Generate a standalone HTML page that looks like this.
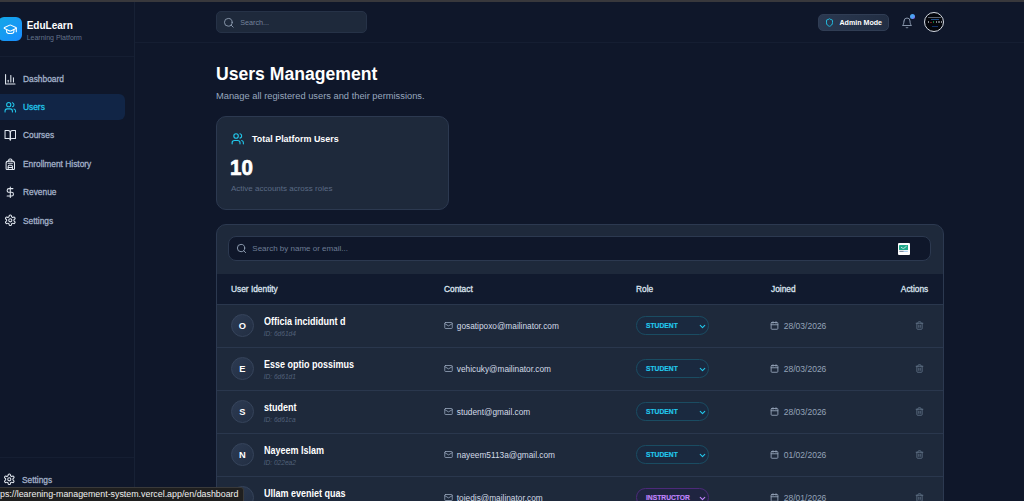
<!DOCTYPE html>
<html><head><meta charset="utf-8">
<style>
*{box-sizing:border-box;margin:0;padding:0}
html,body{width:1024px;height:501px;overflow:hidden;background:#0f172a;font-family:"Liberation Sans",sans-serif;color:#e2e8f0}
.abs{position:absolute}
#topbar{left:0;top:0;width:1024px;height:2px;background:#38383c}
#side{left:0;top:2px;width:135px;height:499px;border-right:1px solid #172135}
#sidehead{left:0;top:2px;width:134px;height:55px;border-bottom:1px solid #151e32}
#logo{left:-2.5px;top:17px;width:24px;height:24px;border-radius:6px;background:linear-gradient(135deg,#12a8e6,#1a8cff)}
.brand{left:26.7px;top:18.5px;font-size:10px;font-weight:700;color:#fff;line-height:13px;white-space:nowrap}
.brand2{left:26.7px;top:33.5px;font-size:7px;color:#64748b;line-height:8px;white-space:nowrap}
.nav{left:23px;font-size:8.8px;font-weight:400;-webkit-text-stroke:.3px;color:#a3b1c9;height:12px;line-height:12px;white-space:nowrap;transform:scaleX(.95);transform-origin:0 50%}
#active{left:0;top:94px;width:125px;height:26px;border-radius:0 6px 6px 0;background:#112546}
#sidefoot{left:0;top:457px;width:134px;height:1px;background:#151e32}
#mainhead{left:135px;top:42px;width:889px;height:1px;background:#151e32}
#search{left:216px;top:11px;width:151px;height:22.3px;border-radius:5px;background:#1e293b;border:1px solid #263247}
#search span{position:absolute;left:23.3px;top:6.6px;font-size:7.2px;line-height:8px;color:#75839b}
#admin{left:818px;top:13.8px;width:71px;height:17.4px;border-radius:5px;background:linear-gradient(90deg,#2a3850,#222e43);border:1px solid #303d54}
#admin span{position:absolute;left:20.5px;top:4.5px;font-size:7.1px;line-height:8px;font-weight:700;color:#fff;white-space:nowrap}
#dot{left:910px;top:13.9px;width:5.2px;height:5.2px;border-radius:50%;background:linear-gradient(135deg,#4aa3f2 55%,#a855f7)}
#avatar{left:924px;top:12px;width:20px;height:20px;border-radius:50%;background:#04060c;border:.9px solid #d5dbe4;overflow:hidden}
#avatar i{position:absolute;display:block;opacity:.6}
h1{position:absolute;left:216px;top:64.3px;font-size:17.6px;font-weight:700;color:#fff;white-space:nowrap;line-height:20px}
.sub{left:216px;top:90px;font-size:9.32px;color:#98a7be;white-space:nowrap;line-height:12px}
#card{left:216px;top:116px;width:233px;height:94px;border-radius:10px;background:#1e293b;border:1px solid #2c3950}
#tbl{left:216px;top:224px;width:728px;height:300px;border-radius:10px;background:#1e293b;border:1px solid #2c3950;overflow:hidden}
#tsearch{left:228px;top:236px;width:702.5px;height:25px;border-radius:8px;background:#0f172a;border:1px solid #2c3950}
#thead{left:217px;top:273.5px;width:726px;height:30.5px;background:#111a2e}
.th{top:284px;font-size:8.6px;font-weight:400;-webkit-text-stroke:.3px;color:#dbe3ee;line-height:10px;white-space:nowrap;transform:scaleX(.97);transform-origin:0 50%}
.row{left:217px;width:726px;height:43px;border-top:1px solid #2a374d}
.av{left:230.8px;width:23px;height:23px;border-radius:50%;background:linear-gradient(135deg,#2c3a52,#222e42);border:1px solid #36445b;text-align:center;line-height:23px;font-size:9.3px;font-weight:700;color:#fff}
.nm{left:263.7px;font-size:10px;font-weight:700;color:#fff;line-height:12px;white-space:nowrap;transform:scaleX(.9);transform-origin:0 50%}
.id{left:263.7px;font-size:6.6px;font-style:italic;color:#52617a;line-height:8px;white-space:nowrap}
.em{left:456.8px;font-size:8.3px;color:#d3dbe7;line-height:10px;white-space:nowrap}
.sel{left:636px;width:73px;height:18.6px;border-radius:9.3px;border:1px solid #1a4c62;background:#1a293f}
.sel span{position:absolute;left:8.7px;top:4.05px;font-size:8px;font-weight:700;-webkit-text-stroke:.2px;color:#22c8ec;line-height:9px;transform:scaleX(.84);transform-origin:0 50%}
.dt{left:783.8px;font-size:8.5px;color:#94a3b8;line-height:10px;white-space:nowrap}
#status{left:-1px;top:487px;width:245px;height:15px;background:#1f1f1f;border:1px solid #3a3a3a;border-radius:0 3px 0 0;font-size:8.86px;color:#f0f0f0;line-height:13px;white-space:nowrap;padding-left:0}
#ext{left:898px;top:243.2px;width:11.6px;height:11.6px;background:#fdfdfd;border-radius:1px}
</style></head><body>
<div class="abs" id="topbar"></div>
<div class="abs" id="side"></div>
<div class="abs" id="sidehead"></div>
<div class="abs" id="logo"></div>
<div class="abs brand">EduLearn</div>
<div class="abs brand2">Learning Platform</div>
<div class="abs" id="active"></div>
<div class="abs nav" style="top:73.4px">Dashboard</div>
<div class="abs nav" style="top:101.4px;color:#22c8ec">Users</div>
<div class="abs nav" style="top:129.2px">Courses</div>
<div class="abs nav" style="top:157.9px">Enrollment History</div>
<div class="abs nav" style="top:186.3px">Revenue</div>
<div class="abs nav" style="top:214.5px">Settings</div>
<div class="abs" id="sidefoot"></div>
<div class="abs nav" style="top:473.5px;left:21.7px">Settings</div>
<div class="abs" id="mainhead"></div>
<div class="abs" id="search"><span>Search...</span></div>
<div class="abs" id="admin"><span>Admin Mode</span></div>
<div class="abs" id="dot"></div>
<div class="abs" id="avatar">
<i style="left:2.5px;top:4.3px;width:13.5px;height:1px;background:#9aa3b0"></i>
<i style="left:5.5px;top:6.2px;width:8.5px;height:.9px;background:#2d7be0"></i>
<i style="left:2.6px;top:8.3px;width:1.4px;height:2px;background:#e5e7eb"></i>
<i style="left:5.2px;top:8.7px;width:1.6px;height:1.4px;background:#b3302a"></i>
<i style="left:8.2px;top:7.7px;width:1.2px;height:2.8px;background:#22c55e"></i>
<i style="left:10.8px;top:8.3px;width:1.4px;height:2px;background:#cfd4dc"></i>
<i style="left:13.4px;top:8.3px;width:1.4px;height:2px;background:#9aa3b0"></i>
<i style="left:16px;top:8.3px;width:1.4px;height:2px;background:#e5e7eb"></i>
<i style="left:6.5px;top:12.5px;width:6px;height:.8px;background:#1d4fa8"></i>
</div>
<h1>Users Management</h1>
<div class="abs sub">Manage all registered users and their permissions.</div>
<div class="abs" id="card"></div>
<div class="abs" style="left:252px;top:133px;font-size:8.95px;font-weight:700;color:#fff;line-height:12px;white-space:nowrap">Total Platform Users</div>
<div class="abs" style="left:230.3px;top:155.6px;font-size:21.6px;font-weight:700;color:#fff;line-height:24px;-webkit-text-stroke:.7px #fff;transform:scaleX(.95);transform-origin:0 50%">10</div>
<div class="abs" style="left:231px;top:184px;font-size:8px;color:#5b6a84;line-height:10px;white-space:nowrap">Active accounts across roles</div>
<div class="abs" id="tbl"></div>
<div class="abs" id="tsearch"></div>
<div class="abs" style="left:252.3px;top:244px;font-size:8px;color:#6d7c95;line-height:10px;white-space:nowrap">Search by name or email...</div>
<div class="abs" id="ext"><svg class="abs" style="left:1.2px;top:1.8px" width="9.2" height="8" viewBox="0 0 23 20"><rect x="0" y="0" width="23" height="12.5" rx="1" fill="#1fa98b"/><path d="M5 5.5l4 2.5 3 .5L19 3" fill="none" stroke="#e3f6f1" stroke-width="2"/><rect x="1" y="14.5" width="11" height="3" fill="#7f8da4"/><rect x="12" y="14.5" width="10" height="3" fill="#a8cdf0"/></svg></div>
<div class="abs" id="thead"></div>
<div class="abs th" style="left:231px">User Identity</div>
<div class="abs th" style="left:444px">Contact</div>
<div class="abs th" style="left:636px">Role</div>
<div class="abs th" style="left:771px">Joined</div>
<div class="abs th" style="right:95.6px;transform-origin:100% 50%">Actions</div>
<div class="abs row" style="top:304px"></div>
<div class="abs av" style="top:314.40px">O</div>
<div class="abs nm" style="top:315.60px">Officia incididunt d</div>
<div class="abs id" style="top:330.10px">ID: 6d61d4</div>
<svg class="abs" style="left:443.70px;top:321.10px" width="9" height="9" viewBox="0 0 24 24" fill="none" stroke="#94a3b8" stroke-width="2.2" stroke-linecap="round" stroke-linejoin="round"><rect x="2" y="4" width="20" height="16" rx="2"/><path d="m22 7-10 6L2 7"/></svg>
<div class="abs em" style="top:321.10px">gosatipoxo@mailinator.com</div>
<div class="abs sel" style="top:316.20px"><span>STUDENT</span></div>
<svg class="abs" style="left:697.80px;top:321.60px" width="9" height="9" viewBox="0 0 24 24" fill="none" stroke="#22c8ec" stroke-width="3" stroke-linecap="round" stroke-linejoin="round"><path d="m6 9 6 6 6-6"/></svg>
<svg class="abs" style="left:770.30px;top:321.10px" width="9" height="9" viewBox="0 0 24 24" fill="none" stroke="#94a3b8" stroke-width="2.4" stroke-linecap="round" stroke-linejoin="round"><rect x="3" y="4" width="18" height="18" rx="2"/><path d="M16 2v4M8 2v4M3 10h18"/></svg>
<div class="abs dt" style="top:321.10px">28/03/2026</div>
<svg class="abs" style="left:914.70px;top:321.10px" width="9" height="9" viewBox="0 0 24 24" fill="none" stroke="#64748b" stroke-width="2.2" stroke-linecap="round" stroke-linejoin="round"><path d="M3 6h18M19 6v14a2 2 0 0 1-2 2H7a2 2 0 0 1-2-2V6M8 6V4a2 2 0 0 1 2-2h4a2 2 0 0 1 2 2v2M10 11v6M14 11v6"/></svg>
<div class="abs row" style="top:347px"></div>
<div class="abs av" style="top:357.40px">E</div>
<div class="abs nm" style="top:358.60px">Esse optio possimus</div>
<div class="abs id" style="top:373.10px">ID: 6d61d1</div>
<svg class="abs" style="left:443.70px;top:364.10px" width="9" height="9" viewBox="0 0 24 24" fill="none" stroke="#94a3b8" stroke-width="2.2" stroke-linecap="round" stroke-linejoin="round"><rect x="2" y="4" width="20" height="16" rx="2"/><path d="m22 7-10 6L2 7"/></svg>
<div class="abs em" style="top:364.10px">vehicuky@mailinator.com</div>
<div class="abs sel" style="top:359.20px"><span>STUDENT</span></div>
<svg class="abs" style="left:697.80px;top:364.60px" width="9" height="9" viewBox="0 0 24 24" fill="none" stroke="#22c8ec" stroke-width="3" stroke-linecap="round" stroke-linejoin="round"><path d="m6 9 6 6 6-6"/></svg>
<svg class="abs" style="left:770.30px;top:364.10px" width="9" height="9" viewBox="0 0 24 24" fill="none" stroke="#94a3b8" stroke-width="2.4" stroke-linecap="round" stroke-linejoin="round"><rect x="3" y="4" width="18" height="18" rx="2"/><path d="M16 2v4M8 2v4M3 10h18"/></svg>
<div class="abs dt" style="top:364.10px">28/03/2026</div>
<svg class="abs" style="left:914.70px;top:364.10px" width="9" height="9" viewBox="0 0 24 24" fill="none" stroke="#64748b" stroke-width="2.2" stroke-linecap="round" stroke-linejoin="round"><path d="M3 6h18M19 6v14a2 2 0 0 1-2 2H7a2 2 0 0 1-2-2V6M8 6V4a2 2 0 0 1 2-2h4a2 2 0 0 1 2 2v2M10 11v6M14 11v6"/></svg>
<div class="abs row" style="top:390px"></div>
<div class="abs av" style="top:400.40px">S</div>
<div class="abs nm" style="top:401.60px">student</div>
<div class="abs id" style="top:416.10px">ID: 6d61ca</div>
<svg class="abs" style="left:443.70px;top:407.10px" width="9" height="9" viewBox="0 0 24 24" fill="none" stroke="#94a3b8" stroke-width="2.2" stroke-linecap="round" stroke-linejoin="round"><rect x="2" y="4" width="20" height="16" rx="2"/><path d="m22 7-10 6L2 7"/></svg>
<div class="abs em" style="top:407.10px">student@gmail.com</div>
<div class="abs sel" style="top:402.20px"><span>STUDENT</span></div>
<svg class="abs" style="left:697.80px;top:407.60px" width="9" height="9" viewBox="0 0 24 24" fill="none" stroke="#22c8ec" stroke-width="3" stroke-linecap="round" stroke-linejoin="round"><path d="m6 9 6 6 6-6"/></svg>
<svg class="abs" style="left:770.30px;top:407.10px" width="9" height="9" viewBox="0 0 24 24" fill="none" stroke="#94a3b8" stroke-width="2.4" stroke-linecap="round" stroke-linejoin="round"><rect x="3" y="4" width="18" height="18" rx="2"/><path d="M16 2v4M8 2v4M3 10h18"/></svg>
<div class="abs dt" style="top:407.10px">28/03/2026</div>
<svg class="abs" style="left:914.70px;top:407.10px" width="9" height="9" viewBox="0 0 24 24" fill="none" stroke="#64748b" stroke-width="2.2" stroke-linecap="round" stroke-linejoin="round"><path d="M3 6h18M19 6v14a2 2 0 0 1-2 2H7a2 2 0 0 1-2-2V6M8 6V4a2 2 0 0 1 2-2h4a2 2 0 0 1 2 2v2M10 11v6M14 11v6"/></svg>
<div class="abs row" style="top:433px"></div>
<div class="abs av" style="top:443.40px">N</div>
<div class="abs nm" style="top:444.60px">Nayeem Islam</div>
<div class="abs id" style="top:459.10px">ID: 022ea2</div>
<svg class="abs" style="left:443.70px;top:450.10px" width="9" height="9" viewBox="0 0 24 24" fill="none" stroke="#94a3b8" stroke-width="2.2" stroke-linecap="round" stroke-linejoin="round"><rect x="2" y="4" width="20" height="16" rx="2"/><path d="m22 7-10 6L2 7"/></svg>
<div class="abs em" style="top:450.10px">nayeem5113a@gmail.com</div>
<div class="abs sel" style="top:445.20px"><span>STUDENT</span></div>
<svg class="abs" style="left:697.80px;top:450.60px" width="9" height="9" viewBox="0 0 24 24" fill="none" stroke="#22c8ec" stroke-width="3" stroke-linecap="round" stroke-linejoin="round"><path d="m6 9 6 6 6-6"/></svg>
<svg class="abs" style="left:770.30px;top:450.10px" width="9" height="9" viewBox="0 0 24 24" fill="none" stroke="#94a3b8" stroke-width="2.4" stroke-linecap="round" stroke-linejoin="round"><rect x="3" y="4" width="18" height="18" rx="2"/><path d="M16 2v4M8 2v4M3 10h18"/></svg>
<div class="abs dt" style="top:450.10px">01/02/2026</div>
<svg class="abs" style="left:914.70px;top:450.10px" width="9" height="9" viewBox="0 0 24 24" fill="none" stroke="#64748b" stroke-width="2.2" stroke-linecap="round" stroke-linejoin="round"><path d="M3 6h18M19 6v14a2 2 0 0 1-2 2H7a2 2 0 0 1-2-2V6M8 6V4a2 2 0 0 1 2-2h4a2 2 0 0 1 2 2v2M10 11v6M14 11v6"/></svg>
<div class="abs row" style="top:476px"></div>
<div class="abs av" style="top:486.40px"></div>
<div class="abs nm" style="top:487.60px">Ullam eveniet quas</div>
<div class="abs id" style="top:502.10px">ID: 000000</div>
<svg class="abs" style="left:443.70px;top:493.10px" width="9" height="9" viewBox="0 0 24 24" fill="none" stroke="#94a3b8" stroke-width="2.2" stroke-linecap="round" stroke-linejoin="round"><rect x="2" y="4" width="20" height="16" rx="2"/><path d="m22 7-10 6L2 7"/></svg>
<div class="abs em" style="top:493.10px">tojedis@mailinator.com</div>
<div class="abs sel" style="top:488.20px;border-color:#4c2a7a;background:#1f2440"><span style="color:#c084fc">INSTRUCTOR</span></div>
<svg class="abs" style="left:697.80px;top:493.60px" width="9" height="9" viewBox="0 0 24 24" fill="none" stroke="#c084fc" stroke-width="3" stroke-linecap="round" stroke-linejoin="round"><path d="m6 9 6 6 6-6"/></svg>
<svg class="abs" style="left:770.30px;top:493.10px" width="9" height="9" viewBox="0 0 24 24" fill="none" stroke="#94a3b8" stroke-width="2.4" stroke-linecap="round" stroke-linejoin="round"><rect x="3" y="4" width="18" height="18" rx="2"/><path d="M16 2v4M8 2v4M3 10h18"/></svg>
<div class="abs dt" style="top:493.10px">28/01/2026</div>
<svg class="abs" style="left:914.70px;top:493.10px" width="9" height="9" viewBox="0 0 24 24" fill="none" stroke="#64748b" stroke-width="2.2" stroke-linecap="round" stroke-linejoin="round"><path d="M3 6h18M19 6v14a2 2 0 0 1-2 2H7a2 2 0 0 1-2-2V6M8 6V4a2 2 0 0 1 2-2h4a2 2 0 0 1 2 2v2M10 11v6M14 11v6"/></svg>
<svg class="abs" style="left:3.15px;top:22.05px" width="14.5" height="14.5" viewBox="0 0 24 24" fill="none" stroke="#ffffff" stroke-width="1.8" stroke-linecap="round" stroke-linejoin="round"><path d="M21.42 10.922a1 1 0 0 0-.019-1.838L12.83 5.18a2 2 0 0 0-1.66 0L2.6 9.08a1 1 0 0 0 0 1.832l8.57 3.908a2 2 0 0 0 1.66 0z"/><path d="M22 10v6"/><path d="M6 12.5V16a6 3 0 0 0 12 0v-3.5"/></svg>
<svg class="abs" style="left:3.80px;top:72.80px" width="12.6" height="12.6" viewBox="0 0 24 24" fill="none" stroke="#e2e8f0" stroke-width="2" stroke-linecap="round" stroke-linejoin="round"><path d="M3 3v18h18"/><path d="M18 17V9"/><path d="M13 17V5"/><path d="M8 17v-3"/></svg>
<svg class="abs" style="left:4.10px;top:100.80px" width="12.6" height="12.6" viewBox="0 0 24 24" fill="none" stroke="#22c8ec" stroke-width="2" stroke-linecap="round" stroke-linejoin="round"><path d="M16 21v-2a4 4 0 0 0-4-4H6a4 4 0 0 0-4 4v2"/><circle cx="9" cy="7" r="4"/><path d="M22 21v-2a4 4 0 0 0-3-3.87"/><path d="M16 3.13a4 4 0 0 1 0 7.75"/></svg>
<svg class="abs" style="left:3.90px;top:129.00px" width="12.6" height="12.6" viewBox="0 0 24 24" fill="none" stroke="#e2e8f0" stroke-width="2" stroke-linecap="round" stroke-linejoin="round"><path d="M2 3h6a4 4 0 0 1 4 4v14a3 3 0 0 0-3-3H2z"/><path d="M22 3h-6a4 4 0 0 0-4 4v14a3 3 0 0 1 3-3h7z"/></svg>
<svg class="abs" style="left:4.00px;top:157.90px" width="12.6" height="12.6" viewBox="0 0 24 24" fill="none" stroke="#e2e8f0" stroke-width="2" stroke-linecap="round" stroke-linejoin="round"><path d="M4 10a4 4 0 0 1 4-4h8a4 4 0 0 1 4 4v10a2 2 0 0 1-2 2H6a2 2 0 0 1-2-2z"/><path d="M8 10h8"/><path d="M8 18h8"/><path d="M8 22v-6a2 2 0 0 1 2-2h4a2 2 0 0 1 2 2v6"/><path d="M9 6V4a2 2 0 0 1 2-2h2a2 2 0 0 1 2 2v2"/></svg>
<svg class="abs" style="left:3.90px;top:185.70px" width="12.6" height="12.6" viewBox="0 0 24 24" fill="none" stroke="#e2e8f0" stroke-width="2" stroke-linecap="round" stroke-linejoin="round"><path d="M12 2v20"/><path d="M17 5H9.5a3.5 3.5 0 0 0 0 7h5a3.5 3.5 0 0 1 0 7H6"/></svg>
<svg class="abs" style="left:3.90px;top:214.00px" width="12.6" height="12.6" viewBox="0 0 24 24" fill="none" stroke="#e2e8f0" stroke-width="2" stroke-linecap="round" stroke-linejoin="round"><path d="M12.22 2h-.44a2 2 0 0 0-2 2v.18a2 2 0 0 1-1 1.73l-.43.25a2 2 0 0 1-2 0l-.15-.08a2 2 0 0 0-2.73.73l-.22.38a2 2 0 0 0 .73 2.73l.15.1a2 2 0 0 1 1 1.72v.51a2 2 0 0 1-1 1.74l-.15.09a2 2 0 0 0-.73 2.73l.22.38a2 2 0 0 0 2.73.73l.15-.08a2 2 0 0 1 2 0l.43.25a2 2 0 0 1 1 1.73V20a2 2 0 0 0 2 2h.44a2 2 0 0 0 2-2v-.18a2 2 0 0 1 1-1.73l.43-.25a2 2 0 0 1 2 0l.15.08a2 2 0 0 0 2.73-.73l.22-.39a2 2 0 0 0-.73-2.73l-.15-.08a2 2 0 0 1-1-1.74v-.5a2 2 0 0 1 1-1.74l.15-.09a2 2 0 0 0 .73-2.73l-.22-.38a2 2 0 0 0-2.73-.73l-.15.08a2 2 0 0 1-2 0l-.43-.25a2 2 0 0 1-1-1.73V4a2 2 0 0 0-2-2z"/><circle cx="12" cy="12" r="3"/></svg>
<svg class="abs" style="left:3.20px;top:473.20px" width="12.6" height="12.6" viewBox="0 0 24 24" fill="none" stroke="#e2e8f0" stroke-width="2" stroke-linecap="round" stroke-linejoin="round"><path d="M12.22 2h-.44a2 2 0 0 0-2 2v.18a2 2 0 0 1-1 1.73l-.43.25a2 2 0 0 1-2 0l-.15-.08a2 2 0 0 0-2.73.73l-.22.38a2 2 0 0 0 .73 2.73l.15.1a2 2 0 0 1 1 1.72v.51a2 2 0 0 1-1 1.74l-.15.09a2 2 0 0 0-.73 2.73l.22.38a2 2 0 0 0 2.73.73l.15-.08a2 2 0 0 1 2 0l.43.25a2 2 0 0 1 1 1.73V20a2 2 0 0 0 2 2h.44a2 2 0 0 0 2-2v-.18a2 2 0 0 1 1-1.73l.43-.25a2 2 0 0 1 2 0l.15.08a2 2 0 0 0 2.73-.73l.22-.39a2 2 0 0 0-.73-2.73l-.15-.08a2 2 0 0 1-1-1.74v-.5a2 2 0 0 1 1-1.74l.15-.09a2 2 0 0 0 .73-2.73l-.22-.38a2 2 0 0 0-2.73-.73l-.15.08a2 2 0 0 1-2 0l-.43-.25a2 2 0 0 1-1-1.73V4a2 2 0 0 0-2-2z"/><circle cx="12" cy="12" r="3"/></svg>
<svg class="abs" style="left:223.30px;top:16.50px" width="11.6" height="11.6" viewBox="0 0 24 24" fill="none" stroke="#94a3b8" stroke-width="1.8" stroke-linecap="round" stroke-linejoin="round"><circle cx="11" cy="11" r="8"/><path d="m21 21-4.3-4.3"/></svg>
<svg class="abs" style="left:235.50px;top:243.10px" width="11" height="11" viewBox="0 0 24 24" fill="none" stroke="#94a3b8" stroke-width="2" stroke-linecap="round" stroke-linejoin="round"><circle cx="11" cy="11" r="8"/><path d="m21 21-4.3-4.3"/></svg>
<svg class="abs" style="left:824.90px;top:17.90px" width="9" height="9" viewBox="0 0 24 24" fill="none" stroke="#22c8ec" stroke-width="2.4" stroke-linecap="round" stroke-linejoin="round"><path d="M20 13c0 5-3.5 7.5-7.66 8.95a1 1 0 0 1-.67-.01C7.5 20.5 4 18 4 13V6a1 1 0 0 1 1-1c2 0 4.5-1.2 6.24-2.72a1.17 1.17 0 0 1 1.52 0C14.51 3.81 17 5 19 5a1 1 0 0 1 1 1z"/></svg>
<svg class="abs" style="left:901.05px;top:16.70px" width="12" height="12" viewBox="0 0 24 24" fill="none" stroke="#94a3b8" stroke-width="1.8" stroke-linecap="round" stroke-linejoin="round"><path d="M6 8a6 6 0 0 1 12 0c0 7 3 9 3 9H3s3-2 3-9"/><path d="M10.3 21a1.94 1.94 0 0 0 3.4 0"/></svg>
<svg class="abs" style="left:230.55px;top:131.55px" width="13.5" height="13.5" viewBox="0 0 24 24" fill="none" stroke="#22c8ec" stroke-width="2" stroke-linecap="round" stroke-linejoin="round"><path d="M16 21v-2a4 4 0 0 0-4-4H6a4 4 0 0 0-4 4v2"/><circle cx="9" cy="7" r="4"/><path d="M22 21v-2a4 4 0 0 0-3-3.87"/><path d="M16 3.13a4 4 0 0 1 0 7.75"/></svg>
<div class="abs" id="status">ps://learening-management-system.vercel.app/en/dashboard</div>
</body></html>
